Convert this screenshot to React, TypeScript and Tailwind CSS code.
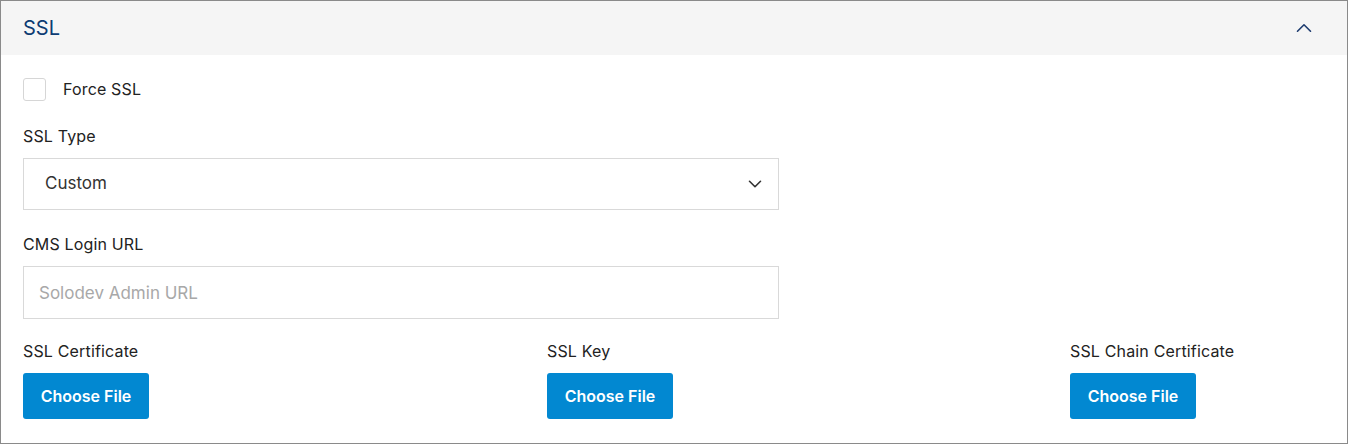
import { ChevronDown, ChevronUp } from "lucide-react"

const font = { fontFamily: "Inter, 'Noto Sans', sans-serif" }

function FileField({ label }: { label: string }) {
  return (
    <div className="flex flex-col">
      <label className="text-[16px] font-normal tracking-[0.01em] leading-[20px] text-[#222]">{label}</label>
      <button
        type="button"
        className="mt-[12px] h-[46px] w-[126px] rounded-[3px] bg-[#0288d1] text-[16px] font-semibold text-white"
      >
        Choose File
      </button>
    </div>
  )
}

export default function App() {
  return (
    <div style={font} className="h-[445px] w-[1349px] bg-white">
      <div className="h-[444px] w-[1348px] border border-[#8a8a8a] bg-white">
        {/* Header */}
        <div className="flex h-[54px] items-center justify-between bg-[#f5f5f5] pl-[22px] pr-[30px]">
          <h2 className="text-[20px] leading-none font-normal text-[#0d3c73]">SSL</h2>
          <ChevronUp className="size-[26px] text-[#1f3d70]" strokeWidth={1.5} />
        </div>

        {/* Body */}
        <div className="px-[22px] pt-[22px]">
          <div className="flex items-center gap-[17px]">
            <span className="size-[23px] rounded-[3px] border border-[#d6d6d6] bg-white" />
            <span className="text-[16px] font-normal tracking-[0.01em] text-[#222]">Force SSL</span>
          </div>

          <label className="mt-[25px] block text-[16px] font-normal tracking-[0.01em] leading-[20px] text-[#222]">SSL Type</label>
          <div className="mt-[12px] flex h-[52px] w-[756px] items-center justify-between border border-[#d9d9d9] pl-[21px] pr-[12px]">
            <span className="text-[17px] text-[#333]">Custom</span>
            <ChevronDown className="size-[22px] text-[#333]" strokeWidth={1.75} />
          </div>

          <label className="mt-[24px] block text-[16px] font-normal tracking-[0.01em] leading-[20px] text-[#222]">CMS Login URL</label>
          <input
            placeholder="Solodev Admin URL"
            className="mt-[12px] block h-[53px] w-[756px] border border-[#d9d9d9] px-[15px] text-[17px] text-[#333] outline-none placeholder:text-[#a8a8a8]"
          />

          <div className="mt-[22px] grid grid-cols-[524px_523px_1fr]">
            <FileField label="SSL Certificate" />
            <FileField label="SSL Key" />
            <FileField label="SSL Chain Certificate" />
          </div>
        </div>
      </div>
    </div>
  )
}
